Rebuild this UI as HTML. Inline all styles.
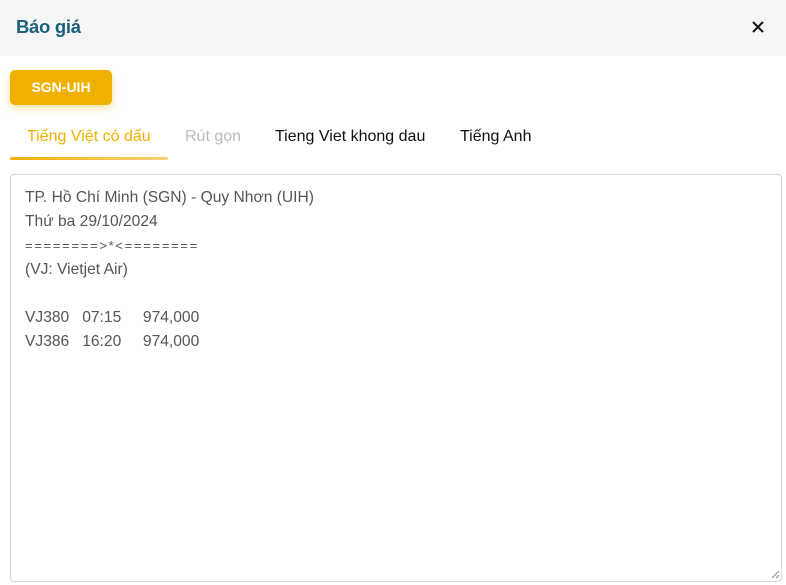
<!DOCTYPE html>
<html><head><meta charset="utf-8"><style>
*{margin:0;padding:0;box-sizing:border-box}
body{width:786px;height:585px;background:#fff;font-family:"Liberation Sans",sans-serif;position:relative;overflow:hidden}
.hdr{position:absolute;left:0;top:0;width:786px;height:56px;background:#f5f5f5}
.title{position:absolute;left:16px;top:16px;font-size:18.5px;color:#1d5f7a;font-weight:bold;letter-spacing:-0.3px}
.x{position:absolute;left:751px;top:20px;width:14px;height:14px}
.btn{position:absolute;left:10px;top:70px;width:102px;height:35px;background:#f0b000;border-radius:5px;color:#fff;font-weight:bold;font-size:14px;text-align:center;line-height:35px;box-shadow:0 3px 8px rgba(240,176,0,.4)}
.tab{position:absolute;top:128px;font-size:16px;color:#111}
.ul{position:absolute;left:10px;top:157px;width:158px;height:3px;background:linear-gradient(90deg,#f0b000,#f5d27a);border-radius:2px}
.box{position:absolute;left:10px;top:174px;width:772px;height:408px;border:1px solid #d6d6d6;border-radius:4px}
.txt{position:absolute;left:25px;top:186px;font-size:15.6px;line-height:24px;color:#555;white-space:pre}
</style></head><body>
<div class="hdr"></div>
<div class="title">Báo giá</div>
<svg class="x" viewBox="0 0 14 14"><path d="M2 2L12 12M12 2L2 12" stroke="#111" stroke-width="2"/></svg>
<div class="btn">SGN-UIH</div>
<div class="tab" style="left:27px;color:#f0b000">Tiếng Việt có dấu</div>
<div class="tab" style="left:185px;color:#bbb">Rút gọn</div>
<div class="tab" style="left:275px">Tieng Viet khong dau</div>
<div class="tab" style="left:460px">Tiếng Anh</div>
<div class="ul"></div>
<div class="box"></div>
<div class="txt">TP. Hồ Chí Minh (SGN) - Quy Nhơn (UIH)
Thứ ba 29/10/2024
<span style="font-size:13px;letter-spacing:1.7px">========&gt;*&lt;========</span>
(VJ: Vietjet Air)

VJ380   07:15     974,000
VJ386   16:20     974,000</div>
<svg style="position:absolute;left:771px;top:570px" width="9" height="9"><path d="M8 1L1 8M8 5L5 8" stroke="#888"/></svg>
</body></html>
